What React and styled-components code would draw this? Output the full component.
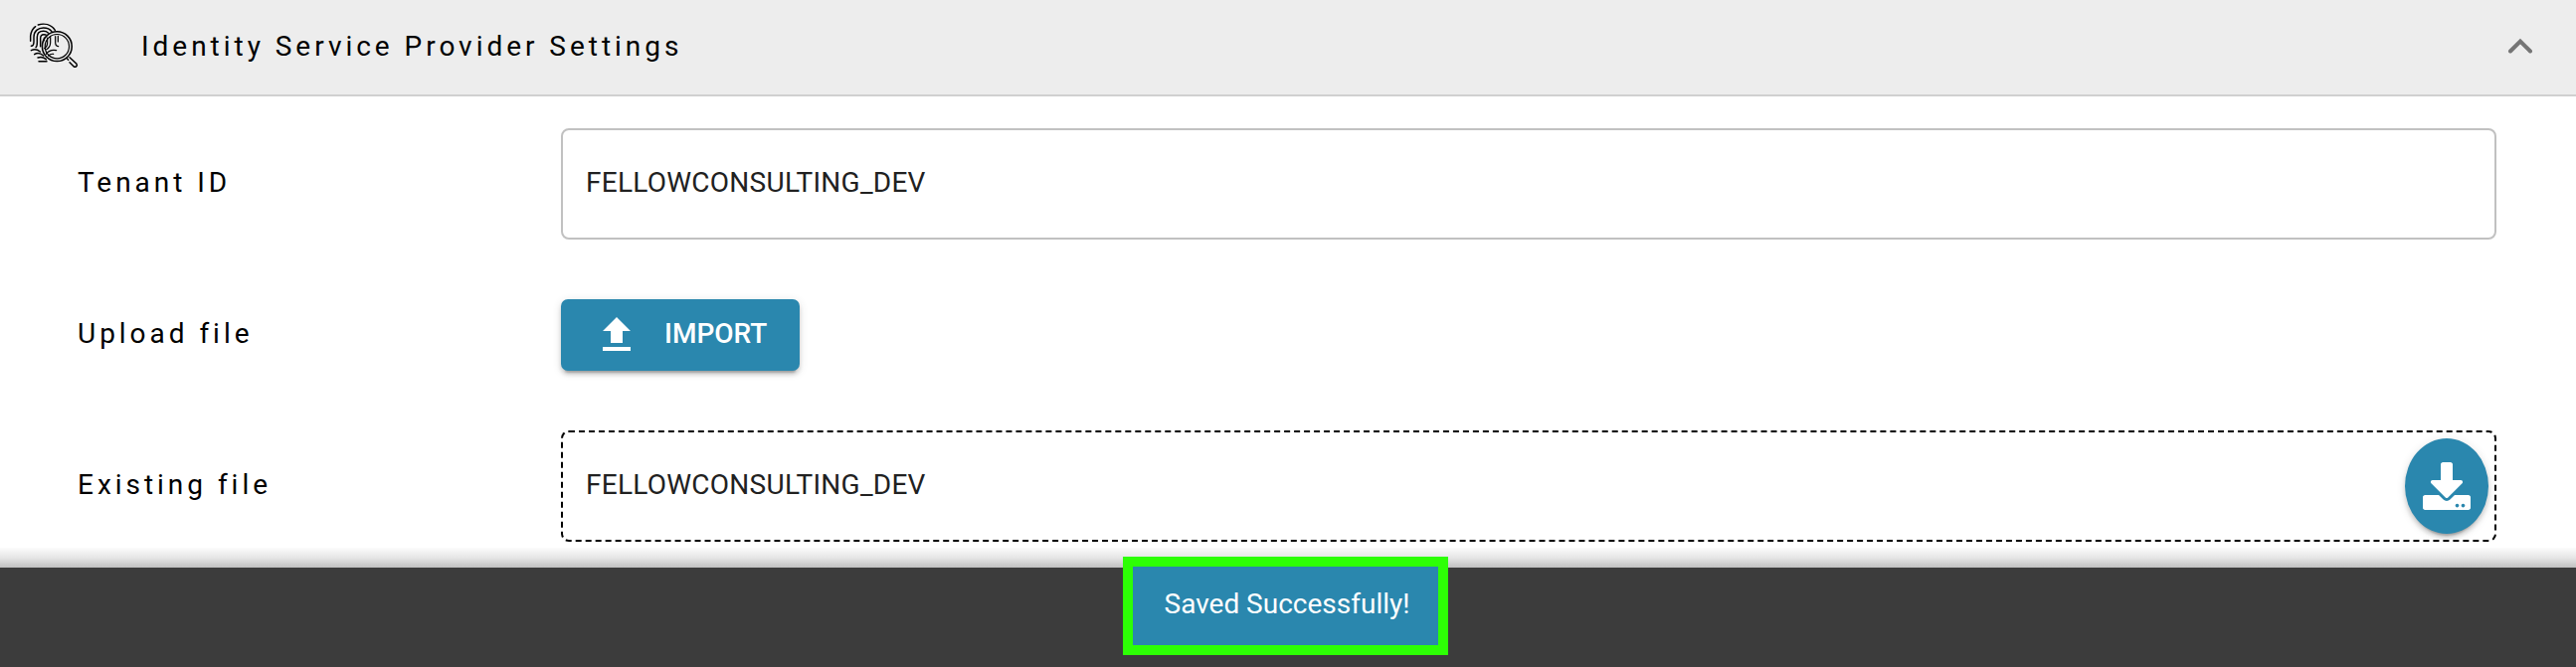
import React from "react";
import styled, { createGlobalStyle } from "styled-components";
import { MdFileUpload } from "react-icons/md";
import { FaDownload } from "react-icons/fa";

const GlobalStyle = createGlobalStyle`
  *, *::before, *::after { box-sizing: border-box; }
  body { margin: 0; background: #fff; font-family: Roboto, "Liberation Sans", sans-serif; }
`;

const Page = styled.div`
  display: flex;
  flex-direction: column;
  height: 671px;
  overflow: hidden;
  font-size: 28px;
  line-height: 32px;
  color: #000;
`;

const Header = styled.header`
  display: flex;
  align-items: center;
  flex: none;
  height: 97px;
  padding: 0 28px 0 29px;
  background: #ededed;
  border-bottom: 2px solid #d0d0d0;
`;

const Title = styled.h1`
  flex: 1;
  margin: 0 0 0 61px;
  padding-bottom: 1px;
  font-size: 28px;
  line-height: 32px;
  font-weight: 400;
  letter-spacing: 3.97px;
`;

const HeaderIcon = styled.svg`
  flex: none;
  width: 52px;
  height: 52px;
  margin-bottom: 1px;
`;

const Chevron = styled.svg`
  width: 48px;
  height: 48px;
  margin: 0 4px 1px 0;
`;

const Form = styled.main`
  display: flex;
  flex-direction: column;
  gap: 40px;
  flex: none;
  height: 454px;
  padding: 32px 80px 0 78px;
`;

const Row = styled.div`
  display: grid;
  grid-template-columns: 486px 1fr;
  align-items: center;
  justify-items: start;
  height: 112px;
`;

const Label = styled.label`
  padding-bottom: 2px;
  letter-spacing: 3.97px;
`;

const Field = styled.div`
  display: flex;
  align-items: center;
  justify-content: space-between;
  width: 100%;
  height: 112px;
  padding: 0 6px 0 23px;
  border: 2px ${(p) => (p.$dashed ? "dashed #000" : "solid #c1c1c1")};
  border-radius: 8px;
  color: #212121;
`;

const Value = styled.span`
  padding-bottom: 2px;
  letter-spacing: 0.00938em;
`;

const ImportButton = styled.button`
  display: flex;
  align-items: center;
  gap: 24px;
  width: 240px;
  height: 72px;
  padding: 0 0 0 32px;
  border: 0;
  border-radius: 7px;
  background: #2a87ae;
  color: #fff;
  font: 500 28px/32px Roboto, sans-serif;
  box-shadow: 0 6px 2px -4px rgba(0, 0, 0, 0.2), 0 4px 4px rgba(0, 0, 0, 0.14), 0 2px 10px rgba(0, 0, 0, 0.12);
`;

const ButtonText = styled.span`
  padding-bottom: 2px;
`;

const DownloadButton = styled.button`
  display: flex;
  align-items: center;
  justify-content: center;
  width: 84px;
  height: 96px;
  padding: 0;
  border: 0;
  border-radius: 50%;
  background: #2a87ae;
  color: #fff;
  box-shadow: 0 6px 2px -4px rgba(0, 0, 0, 0.2), 0 4px 4px rgba(0, 0, 0, 0.14), 0 2px 10px rgba(0, 0, 0, 0.12);
`;

const Shade = styled.div`
  flex: none;
  height: 20px;
  background: linear-gradient(#fcfcfc, #e6e6e6 50%, #c0c0c0);
`;

const Footer = styled.footer`
  display: flex;
  align-items: flex-start;
  flex: 1;
  padding-left: 1129px;
  background: #3c3c3c;
`;

const Toast = styled.div`
  display: flex;
  align-items: center;
  flex: none;
  width: 327px;
  height: 99px;
  margin-top: -11px;
  padding: 0 0 3px 31.5px;
  border: 10px solid #2dff05;
  background: #2a87ae;
  color: #fff;
  white-space: nowrap;
`;

const FingerprintIcon = () => (
  <HeaderIcon viewBox="87 63 156 156" fill="none" stroke="#000" strokeWidth="4.4" strokeLinecap="round">
    <path d="M92 124V108C94 94 99 86 107 80M115 75C134 69 154 74 166 91" />
    <path d="M94 139C100 139 102 134 102 126V112C102 94 115 84 131 84C143 84 151 88 156 95" />
    <path d="M108 143C112 140 112 134 112 128V112C112 100 120 94 131 94C137 94 141 95 145 99" />
    <path d="M122 140V116C122 108 126 104 132 104C134 104 136 104 138 105" />
    <path d="M133 114V122M143 114V129C143 137 139 143 134 146M152 112V128C152 138 147 145 140 149" strokeWidth="3.600" />
    <path d="M167 110V128C167 135 170 139 176 140M175 109V126" strokeWidth="3.600" />
    <path d="M94 152C104 147 113 149 121 156M104 164C113 158 122 160 131 168M114 174C124 170 132 173 139 179M117 185H141" />
    <path d="M139 163C147 153 157 149 170 152M146 168C150 164 155 162 161 163" strokeWidth="3.600" />
    <circle cx="172" cy="140" r="44.700" strokeWidth="4.600" />
    <circle cx="172" cy="140" r="36.500" strokeWidth="3.500" />
    <path d="M210 173L231 193C235 199 227 205 222 200L210 188M202 176L206 181" />
  </HeaderIcon>
);

export default function App() {
  return (
    <Page>
      <GlobalStyle />
      <Header>
        <FingerprintIcon />
        <Title>Identity Service Provider Settings</Title>
        <Chevron viewBox="0 0 48 48" fill="none" stroke="#757575" strokeWidth="4">
          <path d="M14 28.500L24 18.500L34 28.500" strokeLinecap="round" />
        </Chevron>
      </Header>
      <Form>
        <Row>
          <Label>Tenant ID</Label>
          <Field>
            <Value>FELLOWCONSULTING_DEV</Value>
          </Field>
        </Row>
        <Row>
          <Label>Upload file</Label>
          <ImportButton>
            <MdFileUpload size={48} />
            <ButtonText>IMPORT</ButtonText>
          </ImportButton>
        </Row>
        <Row>
          <Label>Existing file</Label>
          <Field $dashed>
            <Value>FELLOWCONSULTING_DEV</Value>
            <DownloadButton aria-label="Download">
              <FaDownload size={48} />
            </DownloadButton>
          </Field>
        </Row>
      </Form>
      <Shade />
      <Footer>
        <Toast>Saved Successfully!</Toast>
      </Footer>
    </Page>
  );
}
